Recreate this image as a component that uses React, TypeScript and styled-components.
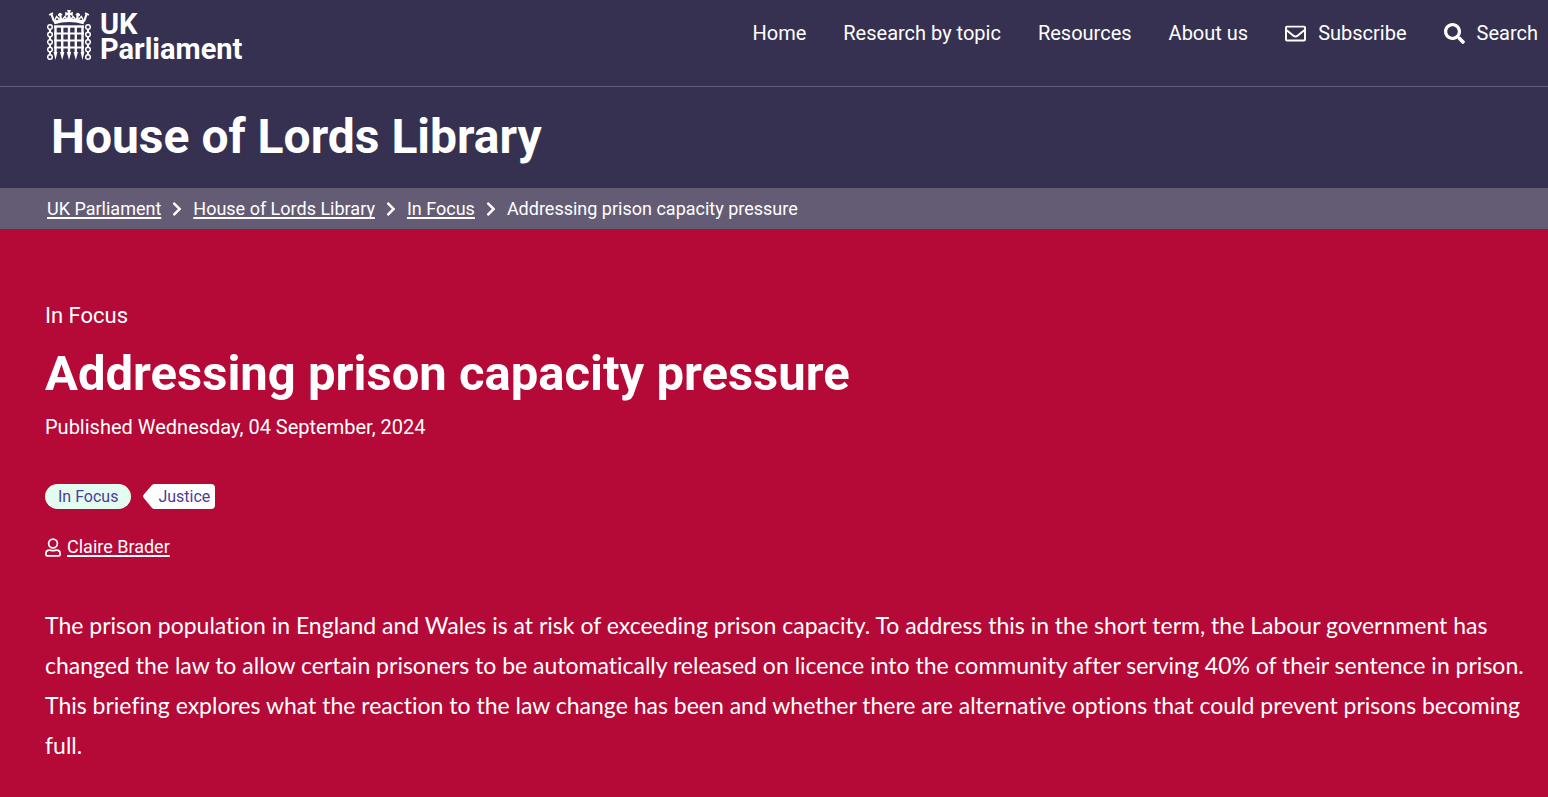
import React from 'react';
import styled, { createGlobalStyle } from 'styled-components';
import { FaChevronRight, FaRegEnvelope, FaSearch } from 'react-icons/fa';

const GlobalStyle = createGlobalStyle`
  *, *::before, *::after { box-sizing: border-box; }
  html { background: #b50938; }
  body {
    margin: 0;
    color: #fff;
    font-family: Roboto, "Open Sans", sans-serif;
    font-size: 18px;
  }
  h1, p, ul, ol { margin: 0; padding: 0; }
  ul, ol { list-style: none; }
  a { color: inherit; }
`;

const Header = styled.header`
  background: #373151;
`;

const TopBar = styled.div`
  display: flex;
  justify-content: space-between;
  align-items: flex-start;
  min-height: 87px;
  padding: 9px 10px 0 47px;
  border-bottom: 1px solid #645c78;
`;

const LogoLink = styled.a`
  display: flex;
  gap: 9px;
  text-decoration: none;
`;

const LogoText = styled.span`
  display: block;
  padding-top: 3px;
  font-size: 29px;
  font-weight: 700;
  line-height: 25px;

  span { display: block; }
`;

const NavList = styled.ul`
  display: flex;
  gap: 37px;
`;

const NavLink = styled.a`
  display: flex;
  align-items: center;
  gap: 12px;
  font-size: 20px;
  line-height: 48px;
  text-decoration: none;
  white-space: nowrap;
`;

const SiteTitle = styled.div`
  padding: 20px 51px 21px;
  font-size: 48px;
  font-weight: 700;
  line-height: 60px;

  a { text-decoration: none; }
`;

const Breadcrumb = styled.nav`
  padding: 0 47px;
  background: #645c75;

  ol { display: flex; }
  li {
    display: flex;
    align-items: center;
    line-height: 41px;
  }
  svg { margin: 0 8px; }
`;

const TextLink = styled.a`
  text-decoration: underline;
  text-decoration-thickness: 2px;
  text-underline-offset: 2px;
  text-decoration-skip-ink: none;
`;

const Article = styled.main`
  padding: 71px 15px 32px 45px;
  background: #b50938;
`;

const Kicker = styled.p`
  font-size: 22px;
  line-height: 32px;
`;

const Headline = styled.h1`
  margin-top: 12px;
  font-size: 49px;
  line-height: 60px;
`;

const Published = styled.p`
  margin-top: 8px;
  font-size: 20px;
  line-height: 30px;
`;

const Tags = styled.ul`
  display: flex;
  gap: 12px;
  margin-top: 42px;
`;

const Pill = styled.a`
  display: block;
  padding: 0 13px;
  border-radius: 13px;
  background: #e3fcf1;
  color: #4e3b96;
  font-size: 16px;
  line-height: 25px;
  text-decoration: none;
`;

const TopicTag = styled.a`
  display: flex;
  color: #4e3b96;
  font-size: 16px;
  line-height: 25px;
  text-decoration: none;

  svg { display: block; fill: #fff; }
  span {
    padding: 0 5px 0 2px;
    border-radius: 0 4px 4px 0;
    background: #fff;
  }
`;

const Author = styled.p`
  display: flex;
  align-items: center;
  gap: 6px;
  margin-top: 25px;
  line-height: 26px;
`;

const Summary = styled.p`
  margin-top: 45px;
  font-family: Lato, "Open Sans", sans-serif;
  font-size: 23px;
  font-variant-ligatures: no-common-ligatures;
  line-height: 40px;
`;

function Portcullis() {
  return (
    <svg width="44" height="52" viewBox="0 0 44 52" fill="none" stroke="#fff" aria-hidden="true">
      <path d="M7 13.500Q22 9 37 13.500" strokeWidth="3.600" />
      <path d="M7 12.500L4.200 4.500M14 10.500L12.800 4M30 10.500L31.200 4M37 12.500L39.800 4.500" strokeWidth="2.200" />
      <path d="M2.200 6L6 4M11 6L15.200 5.300M28.800 5.300L33 6M38 4L41.800 6" strokeWidth="1.800" />
      <path d="M7.500 12L9.600 7.500L13 11M31 11L34.400 7.500L36.500 12M15 11L18 7.500L20 10.500M24 10.500L26 7.500L29 11" strokeWidth="1.500" />
      <path d="M20 1H24L22.900 3.900L25.800 2.800V7L22.900 5.900L24.500 11H19.500L21.100 5.900L18.200 7V2.800L21.100 3.900Z" fill="#fff" stroke="none" />
      <path d="M7 17.500H37" strokeWidth="2.400" />
      <path d="M7 24.500H37M7 31.500H37M7 38.500H37" strokeWidth="1.800" />
      <path d="M8.500 17V45M15.200 17V45M22 17V45M28.800 17V45M35.500 17V45" strokeWidth="2.400" />
      <path d="M8.500 51L6.600 43H10.400ZM15.200 51L13 43H17.400ZM22 51L19.800 43H24.200ZM28.800 51L26.600 43H31ZM35.500 51L33.600 43H37.400Z" fill="#fff" stroke="none" />
      {[3, 41].map((x) => (
        <g key={x} strokeWidth="1.500">
          {[18, 25.5, 33, 40.5, 48].map((y) => (
            <circle key={y} cx={x} cy={y} r="2.300" />
          ))}
          <path d={`M${x} 20V23.500M${x} 27.500V31M${x} 35V38.500M${x} 42.500V46`} strokeWidth="2" />
        </g>
      ))}
    </svg>
  );
}

function PersonIcon() {
  return (
    <svg width="16" height="19" viewBox="0 0 16 19" fill="none" stroke="#fff" strokeWidth="1.7" aria-hidden="true">
      <circle cx="8" cy="5.500" r="4.400" />
      <path d="M4.500 12.200C2.400 12.200 .9 13.600 .9 15.600V16.500C.9 17.400 1.400 17.900 2.300 17.900H13.700C14.600 17.900 15.100 17.400 15.100 16.500V15.600C15.100 13.600 13.600 12.200 11.500 12.200C10.400 12.200 9.800 12.700 8 12.700S5.600 12.200 4.500 12.200Z" />
    </svg>
  );
}

const navItems = [
  { label: 'Home' },
  { label: 'Research by topic' },
  { label: 'Resources' },
  { label: 'About us' },
  { label: 'Subscribe', icon: <FaRegEnvelope size={21} /> },
  { label: 'Search', icon: <FaSearch size={21} /> },
];

const trail = ['UK Parliament', 'House of Lords Library', 'In Focus'];

export default function App() {
  return (
    <>
      <GlobalStyle />
      <Header>
        <TopBar>
          <LogoLink href="#" aria-label="UK Parliament">
            <Portcullis />
            <LogoText>
              <span>UK</span>
              <span>Parliament</span>
            </LogoText>
          </LogoLink>
          <nav aria-label="Main">
            <NavList>
              {navItems.map(({ label, icon }) => (
                <li key={label}>
                  <NavLink href="#">
                    {icon}
                    {label}
                  </NavLink>
                </li>
              ))}
            </NavList>
          </nav>
        </TopBar>
        <SiteTitle>
          <a href="#">House of Lords Library</a>
        </SiteTitle>
      </Header>
      <Breadcrumb aria-label="Breadcrumb">
        <ol>
          {trail.map((label) => (
            <li key={label}>
              <TextLink href="#">{label}</TextLink>
              <FaChevronRight size={16} />
            </li>
          ))}
          <li aria-current="page">Addressing prison capacity pressure</li>
        </ol>
      </Breadcrumb>
      <Article>
        <Kicker>In Focus</Kicker>
        <Headline>Addressing prison capacity pressure</Headline>
        <Published>Published Wednesday, 04 September, 2024</Published>
        <Tags>
          <li>
            <Pill href="#">In Focus</Pill>
          </li>
          <li>
            <TopicTag href="#">
              <svg width="13" height="25" viewBox="0 0 13 25" aria-hidden="true">
                <path d="M13 0H11.500Q10 0 9 1L.6 10.800Q-.4 12.300 .6 13.800L9 24Q10 25 11.500 25H13Z" />
              </svg>
              <span>Justice</span>
            </TopicTag>
          </li>
        </Tags>
        <Author>
          <PersonIcon />
          <TextLink href="#">Claire Brader</TextLink>
        </Author>
        <Summary>
          The prison population in England and Wales is at risk of exceeding prison capacity. To
          address this in the short term, the Labour government has changed the law to allow certain
          prisoners to be automatically released on licence into the community after serving 40% of
          their sentence in prison. This briefing explores what the reaction to the law change has
          been and whether there are alternative options that could prevent prisons becoming full.
        </Summary>
      </Article>
    </>
  );
}
